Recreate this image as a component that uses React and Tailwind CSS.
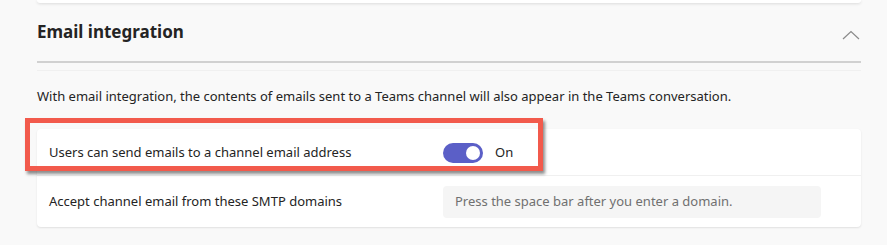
const font = { fontFamily: '"Segoe UI", "Noto Sans", sans-serif' };

function Chevron() {
  return (
    <svg width="18" height="10" viewBox="0 0 18 10" fill="none" className="mr-[1px]">
      <polyline points="1,9 9,1.5 17,9" stroke="#8a8a8a" strokeWidth="1.2" />
    </svg>
  );
}

function Toggle() {
  return (
    <div className="flex items-center gap-3">
      <div className="flex h-5 w-10 items-center justify-end rounded-full bg-[#5b5fc7] px-[3px]">
        <div className="h-[14px] w-[14px] rounded-full bg-white" />
      </div>
      <span className="text-[13px] text-[#242424]">On</span>
    </div>
  );
}

function App() {
  return (
    <div
      style={font}
      className="relative h-[245px] w-[887px] overflow-hidden bg-[#f9f9f9] pl-[37px] pr-[26px]"
    >
      {/* bottom of the card above */}
      <div className="h-[3px] rounded-b bg-white shadow-[0_1px_3px_rgba(0,0,0,0.12)]" />

      <div className="flex h-[60px] items-center justify-between border-b-2 border-[#d1d1d1]">
        <h2 className="text-[17px] font-bold text-[#242424]">Email integration</h2>
        <div className="pt-[6px]">
          <Chevron />
        </div>
      </div>
      <div className="mt-[7px] h-px bg-[#f0f0f0]" />

      <p className="pt-[15px] text-[13px] leading-5 text-[#242424]">
        With email integration, the contents of emails sent to a Teams channel will also appear in the Teams
        conversation.
      </p>

      <div className="mt-[23px] rounded bg-white shadow-[0_1px_2px_rgba(0,0,0,0.1)]">
        <div className="flex h-[47px] items-center border-b border-[#f0f0f0] pl-3 pt-[2px]">
          <span className="w-[394px] text-[13px] text-[#242424]">
            Users can send emails to a channel email address
          </span>
          <Toggle />
        </div>
        <div className="flex h-[51px] items-center pl-3">
          <span className="w-[394px] text-[13px] text-[#242424]">
            Accept channel email from these SMTP domains
          </span>
          <div className="flex h-8 w-[378px] items-center rounded bg-[#f5f5f5] px-3 text-[13px] text-[#707070]">
            Press the space bar after you enter a domain.
          </div>
        </div>
      </div>

      {/* annotation box */}
      <div className="absolute left-[25px] top-[118px] h-[53px] w-[518px] border-[5px] border-[#f25a4c] shadow-[2px_3px_3px_rgba(0,0,0,0.45)]" />
    </div>
  );
}

export default App;
